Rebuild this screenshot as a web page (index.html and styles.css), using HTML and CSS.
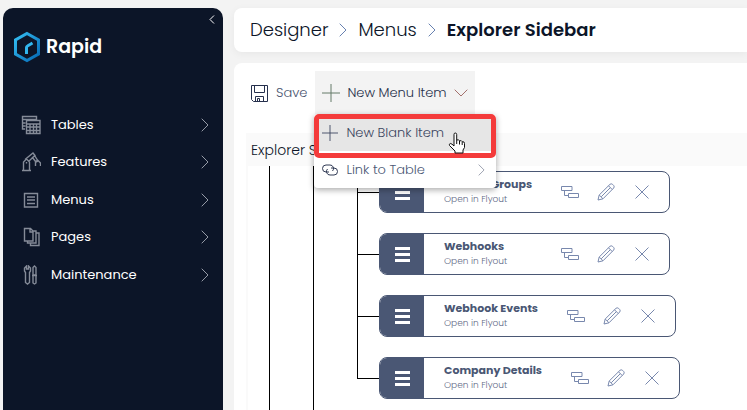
FILE: index.html
```html
<!DOCTYPE html>
<html lang="en">
<head>
<meta charset="utf-8">
<title>Explorer Sidebar</title>
<link rel="stylesheet" href="styles.css">
</head>
<body>
<svg class="sprite" aria-hidden="true">
  <symbol id="chevron" viewBox="0 0 8 14"><path d="M.7.7 7 7 .7 13.3" fill="none" stroke="currentColor"/></symbol>
  <symbol id="plus" viewBox="0 0 18 18"><path d="M9 0v18M0 9h18" fill="none" stroke="currentColor"/></symbol>
  <symbol id="bars" viewBox="0 0 15 15"><path d="M0 1.5h15M0 7.5h15M0 13.5h15" stroke="currentColor" stroke-width="3"/></symbol>
  <symbol id="child" viewBox="0 0 18 14"><path d="M.5 1.500h10.500v4H.5zM7.500 8.500h10v4h-10zM3.500 5.500v5h4" fill="none" stroke="currentColor"/></symbol>
  <symbol id="pencil" viewBox="0 0 18 18"><path d="M1 17l1.200-5L13 1.300q1.200-1 2.500 0l1.200 1.200q1 1.300 0 2.500L6 15.800zM2.200 12 6 15.800M11.500 2.800l3.700 3.700M4.200 13.800 13.300 4.700" fill="none" stroke="currentColor" stroke-linejoin="round"/></symbol>
  <symbol id="cross" viewBox="0 0 14 14"><path d="M.5.5l13 13M13.500.5l-13 13" fill="none" stroke="currentColor"/></symbol>
</svg>
<div class="app">
  <aside class="sidebar">
    <button class="collapse" aria-label="Collapse sidebar"><svg class="flip" width="6" height="9" viewBox="0 0 6 9"><path d="M1 .5l4 4-4 4" fill="none" stroke="#fff"/></svg></button>
    <a class="logo" href="#">
      <svg width="28" height="32" viewBox="0 0 28 32" fill="none" aria-hidden="true">
        <defs><linearGradient id="blue" x1="0" y1="0" x2="1" y2="1"><stop offset="0" stop-color="#35c0f4"/><stop offset="1" stop-color="#0568b4"/></linearGradient></defs>
        <path d="M14 2.500 25.500 9v14L14 29.500 2.500 23V9z" stroke="url(#blue)" stroke-width="3"/>
        <path d="M13.500 23v-6.500q0-1 1-1.500l5-3" stroke="#31b6ef" stroke-width="3"/>
      </svg>
      <span>Rapid</span>
    </a>
    <nav>
      <ul class="nav">
        <li><a href="#">
          <svg class="nav-icon" viewBox="0 0 20 20"><path d="M4 14H1.500V1.500h14V5M1.500 4.500h14M1.500 8h3M1.500 11h3M5.500 5.500h13.500v13H5.500zM5.500 9h13.500M5.500 12h13.500M5.500 15.500h13.500M9 8.500v10M12.500 8.500v10M15.500 8.500v10"/></svg>
          <span>Tables</span><svg class="arrow"><use href="#chevron"/></svg></a></li>
        <li><a href="#">
          <svg class="nav-icon" viewBox="0 0 20 20"><path d="M1 18.500h9M2.500 18V10l3-3 3 3v8M5.500 10v1.500M4 7.500l8-6.500 2 2.500L8 9M12 1l5 8-2 1-4-5M14.500 14v-4l2-2 3 3v3"/></svg>
          <span>Features</span><svg class="arrow"><use href="#chevron"/></svg></a></li>
        <li><a href="#">
          <svg class="nav-icon" viewBox="0 0 20 20"><path d="M3.500 3.500h13v13.500h-13zM6 7h8M6 10h8M6 13.500h8"/></svg>
          <span>Menus</span><svg class="arrow"><use href="#chevron"/></svg></a></li>
        <li><a href="#">
          <svg class="nav-icon" viewBox="0 0 20 20"><path d="M3.500 1.500h6L12 4v10H3.500zM9 1.500V5h3M12 4h3v12H6.500v-2M15 6h3v12.500H9.500V16"/></svg>
          <span>Pages</span><svg class="arrow"><use href="#chevron"/></svg></a></li>
        <li><a href="#">
          <svg class="nav-icon" viewBox="0 0 20 20"><path d="M5.500 1v3h2V1l2 2v3L8.500 7.500v10l-2 1.500-2-1.500v-10L3.500 6V3zM12 2.500 13.500 1 15 2.500V10h-3zM11 10.500h5M12 11v7l1.500 1 1.500-1v-7"/></svg>
          <span>Maintenance</span><svg class="arrow"><use href="#chevron"/></svg></a></li>
      </ul>
    </nav>
  </aside>

  <main class="main">
    <nav class="crumbs" aria-label="Breadcrumb">
      <a href="#">Designer</a><svg class="sep"><use href="#chevron"/></svg>
      <a href="#">Menus</a><svg class="sep"><use href="#chevron"/></svg>
      <strong>Explorer Sidebar</strong>
    </nav>

    <section class="panel">
      <div class="toolbar">
        <button class="save">
          <svg width="17" height="17" viewBox="0 0 17 17" fill="none" stroke="#26304d"><path d="M.5.5h16v16H2.500l-2-2zM3.500.5v7h10v-7M4.500 16.500v-5h8v5M6.500 16v-2.500h2V16"/></svg>
          Save</button>
        <div class="dropdown">
          <button class="new-item" aria-expanded="true">
            <svg class="plus" width="18" height="18"><use href="#plus"/></svg>
            New Menu Item
            <svg width="14" height="8" viewBox="0 0 14 8"><path d="M.7.7 7 7 13.300.7" fill="none" stroke="#a3706c"/></svg>
          </button>
          <div class="menu">
            <button class="blank">
              <svg width="16" height="16"><use href="#plus"/></svg>New Blank Item</button>
            <button class="link">
              <svg width="16" height="12" viewBox="0 0 16 12" fill="none" stroke="#303a55"><path d="M7 8H4A3.500 3.500 0 0 1 4 1h4a3.500 3.500 0 0 1 2.500 6M9 4h3a3.500 3.500 0 0 1 0 7H8A3.500 3.500 0 0 1 5.500 5"/></svg>
              Link to Table<svg class="more" width="7" height="12"><use href="#chevron"/></svg></button>
            <svg class="cursor" width="18" height="22" viewBox="0 0 18 22" aria-hidden="true"><path d="M6 14V2.500q0-1.500 1.300-1.500t1.400 1.500V8q2.300-.8 2.800.8 2.200-.6 2.700.9 2.300-.4 2.300 1.800v4L15 18v3H7v-2l-5.500-5.500q-.8-1.500.8-2 1.500 0 3.700 2.500z" fill="#fff" stroke="#111"/><path d="M8.700 8v4M11.500 9v3.500M14.200 10v3" stroke="#111"/></svg>
          </div>
        </div>
      </div>

      <div class="explorer">
        <h2>Explorer Sidebar</h2>
        <div class="tree"><div class="branch"><ul class="nodes">
          <li class="node"><div class="card">
            <button class="handle" aria-label="Move"><svg width="15" height="15"><use href="#bars"/></svg></button>
            <div class="label"><b>Product Groups</b><small>Open in Flyout</small></div>
            <div class="actions"><button aria-label="Add child"><svg width="18" height="14"><use href="#child"/></svg></button><button aria-label="Edit"><svg width="18" height="18"><use href="#pencil"/></svg></button><button aria-label="Delete"><svg width="14" height="14"><use href="#cross"/></svg></button></div>
          </div></li>
          <li class="node"><div class="card">
            <button class="handle" aria-label="Move"><svg width="15" height="15"><use href="#bars"/></svg></button>
            <div class="label"><b>Webhooks</b><small>Open in Flyout</small></div>
            <div class="actions"><button aria-label="Add child"><svg width="18" height="14"><use href="#child"/></svg></button><button aria-label="Edit"><svg width="18" height="18"><use href="#pencil"/></svg></button><button aria-label="Delete"><svg width="14" height="14"><use href="#cross"/></svg></button></div>
          </div></li>
          <li class="node"><div class="card">
            <button class="handle" aria-label="Move"><svg width="15" height="15"><use href="#bars"/></svg></button>
            <div class="label"><b>Webhook Events</b><small>Open in Flyout</small></div>
            <div class="actions"><button aria-label="Add child"><svg width="18" height="14"><use href="#child"/></svg></button><button aria-label="Edit"><svg width="18" height="18"><use href="#pencil"/></svg></button><button aria-label="Delete"><svg width="14" height="14"><use href="#cross"/></svg></button></div>
          </div></li>
          <li class="node"><div class="card">
            <button class="handle" aria-label="Move"><svg width="15" height="15"><use href="#bars"/></svg></button>
            <div class="label"><b>Company Details</b><small>Open in Flyout</small></div>
            <div class="actions"><button aria-label="Add child"><svg width="18" height="14"><use href="#child"/></svg></button><button aria-label="Edit"><svg width="18" height="18"><use href="#pencil"/></svg></button><button aria-label="Delete"><svg width="14" height="14"><use href="#cross"/></svg></button></div>
          </div></li>
        </ul></div></div>
      </div>
    </section>
  </main>
</div>
</body>
</html>
```
FILE: styles.css
```css
* { box-sizing: border-box; }
body {
  margin: 0;
  background: #f3f3f3;
  color: #0c1528;
  font: 300 13px/20px Poppins, Inter, sans-serif;
}
button { border: 0; padding: 0; background: none; color: inherit; font: inherit; text-align: left; }
a { color: inherit; text-decoration: none; }
ul { list-style: none; margin: 0; padding: 0; }
svg { flex: none; display: block; }
.sprite { position: absolute; width: 0; height: 0; }

.app { display: flex; gap: 11px; height: 100vh; padding: 8px 0 0 3px; overflow: hidden; }

.sidebar { flex: none; width: 220px; background: #0c1528; color: #fff; border-radius: 10px 10px 0 0; }
.collapse { display: block; margin-left: auto; padding: 7px 8px; }
.flip { transform: scaleX(-1); }
.logo { display: flex; align-items: center; gap: 5px; padding: 0 10px; font-size: 19px; line-height: 32px; font-weight: 600; }
.nav { padding: 43px 14px 0 18px; }
.nav a { display: flex; align-items: center; gap: 10px; height: 37px; font-weight: 400; }
.nav li:nth-child(even) a { height: 38px; }
.nav-icon { width: 20px; height: 20px; fill: none; stroke: #858b98; stroke-width: 1.4; }
.arrow { width: 8px; height: 14px; margin-left: auto; color: #969ba7; }

.main { flex: 1; min-width: 0; display: flex; flex-direction: column; gap: 11px; }
.crumbs {
  display: flex; align-items: center; gap: 11px;
  height: 44px; padding: 0 16px 1px;
  background: #fff; border-radius: 8px 0 0 8px;
  box-shadow: 0 2px 8px #0000000d;
  font-size: 18px; white-space: nowrap;
}
.crumbs strong { font-weight: 600; }
.sep { width: 8px; height: 14px; color: #6781b0; }

.panel {
  flex: 1; min-height: 0; display: flex; flex-direction: column;
  padding: 8px 0 0 12px; background: #fff; border-radius: 8px 0 0 0;
}
.toolbar { display: flex; gap: 8px; padding-left: 5px; color: #26304a; }
.save { display: flex; align-items: center; gap: 8px; color: #4a5570; }
.dropdown { position: relative; }
.new-item { display: flex; align-items: center; gap: 7px; height: 44px; padding: 0 7px; background: #f3f3f3; }
.plus { color: #647b68; }
.menu {
  position: absolute; top: 43px; left: -1px; z-index: 1;
  width: 182px; background: #fff; border-radius: 4px; color: #4a5774;
  box-shadow: 0 2px 6px #0005;
}
.menu button { display: flex; align-items: center; gap: 8px; width: 100%; white-space: nowrap; }
.menu .blank {
  height: 44px; padding: 0 3px 6px;
  border: 5px solid #f43b3b; border-radius: 5px;
  background: linear-gradient(#e6e6e6 32px, #fff 32px);
  color: #3b4560;
}
.menu .link { height: 30px; padding: 0 11px 6px 8px; }
.more { margin-left: auto; color: #8d93a5; }
.cursor { position: absolute; left: 134px; top: 18px; }

.explorer { flex: 1; min-height: 0; display: flex; flex-direction: column; margin-top: 18px; border-left: 2px solid #fafafa; }
h2 { margin: 0; padding: 7px 3px 6px; background: #fafafa; font-size: 14px; line-height: 20px; font-weight: 300; }
.tree { flex: 1; min-height: 0; display: flex; overflow: hidden; padding-left: 21px; }
.branch { border-left: 1px solid #000; padding-left: 43px; }
.nodes { height: 100%; border-left: 1px solid #000; padding: 5px 0 0 43px; }
.node { position: relative; padding: 0 0 20px 22px; }
.node::before { content: ""; position: absolute; left: 0; top: 21px; width: 22px; border-top: 1px solid #000; }
.node::after { content: ""; position: absolute; left: 0; top: 0; bottom: 0; border-left: 1px solid #000; }
.node:first-child::after { top: -5px; }
.node:last-child::after { bottom: auto; height: 22px; }
.card {
  display: flex; width: max-content; height: 42px;
  border: 1px solid #4a5774; border-radius: 8px; overflow: hidden;
  background: #fff; color: #4a5774;
}
.handle { width: 44px; display: grid; place-items: center; background: #4a5774; color: #fff; }
.label { display: flex; flex-direction: column; justify-content: center; min-width: 137px; padding: 0 29px 2px 20px; white-space: nowrap; }
.label b { font-size: 11px; line-height: 16px; font-weight: 700; }
.label small { font-size: 9px; line-height: 14px; color: #5f6a86; }
.actions { display: flex; align-items: center; gap: 18px; padding-right: 18px; color: #7888ad; }
.actions button { display: grid; place-items: center; width: 18px; }
```
